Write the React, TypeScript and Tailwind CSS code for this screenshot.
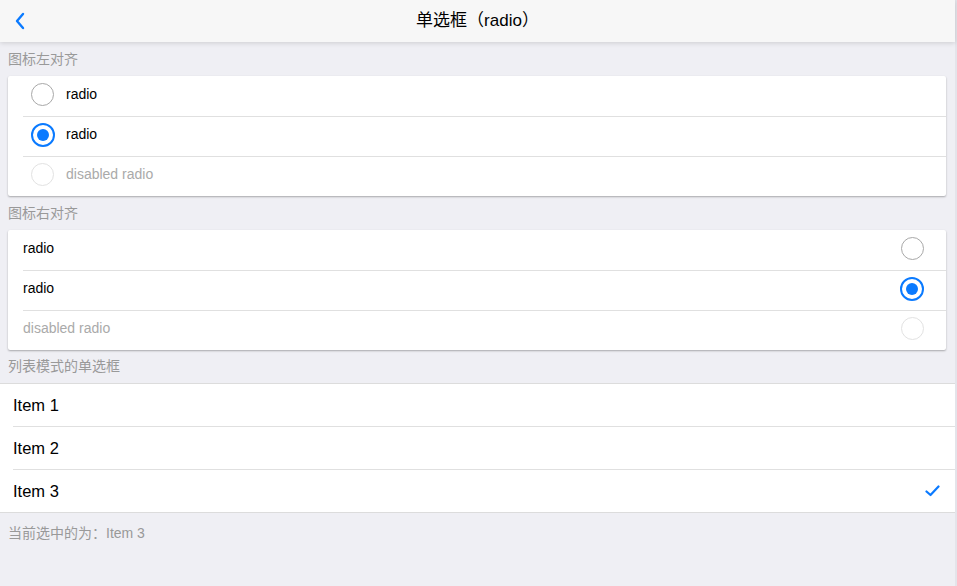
import React from "react";

const font = { fontFamily: '"Liberation Sans", Arial, "Noto Sans CJK SC", sans-serif' };

function Radio({ checked, disabled }: { checked?: boolean; disabled?: boolean }) {
  if (checked) {
    return (
      <div className="flex h-[24px] w-[24px] items-center justify-center rounded-full border-2 border-[#0a7aff]">
        <div className="h-[12px] w-[12px] rounded-full bg-[#0a7aff]" />
      </div>
    );
  }
  return (
    <div
      className={
        "h-[23px] w-[23px] rounded-full border " +
        (disabled ? "border-[#e2e2e2]" : "border-[#a8a8a8]")
      }
    />
  );
}

function SectionTitle({ children, h }: { children: React.ReactNode; h?: string }) {
  return (
    <div className={"flex items-center px-[8px] text-[14px] text-[#999] " + (h ?? "h-[34px]")}>{children}</div>
  );
}

export default function App() {
  const rows = [
    { label: "radio", checked: false, disabled: false },
    { label: "radio", checked: true, disabled: false },
    { label: "disabled radio", checked: false, disabled: true },
  ];
  return (
    <div className="flex min-h-[586px] w-[957px] bg-[#efeff4]" style={font}>
      <div className="w-[955px]">
        <div className="relative z-10 flex h-[42px] items-center justify-center bg-[#f7f7f7] shadow-[0_1px_5px_rgba(0,0,0,0.15)]">
          <svg className="absolute left-[14px] top-[12px]" width="12" height="18" viewBox="0 0 12 18">
            <path d="M9 2 L3 9 L9 16" fill="none" stroke="#0a7aff" strokeWidth="2.4" strokeLinecap="round" strokeLinejoin="round" />
          </svg>
          <span className="text-[17px] text-[#000]">单选框（radio）</span>
        </div>

        <SectionTitle>图标左对齐</SectionTitle>
        <div className="ml-[8px] mr-[9px] rounded-[2px] bg-white shadow-[0_1px_2px_rgba(0,0,0,0.3)]">
          {rows.map((r, i) => (
            <div key={i} className="flex h-[40px] items-center pl-[15px]">
              <div className={"flex h-full flex-1 items-center pb-[4px] " + (i > 0 ? "border-t border-[#e0e0e0]" : "")}>
                <div className="flex w-[43px] items-center pl-[8px]">
                  <Radio checked={r.checked} disabled={r.disabled} />
                </div>
                <span className={"text-[14px] " + (r.disabled ? "text-[#aaa]" : "text-black")}>{r.label}</span>
              </div>
            </div>
          ))}
        </div>

        <SectionTitle>图标右对齐</SectionTitle>
        <div className="ml-[8px] mr-[9px] rounded-[2px] bg-white shadow-[0_1px_2px_rgba(0,0,0,0.3)]">
          {rows.map((r, i) => (
            <div key={i} className="flex h-[40px] items-center pl-[15px]">
              <div
                className={
                  "flex h-full flex-1 items-center justify-between pb-[4px] pr-[22px] " +
                  (i > 0 ? "border-t border-[#e0e0e0]" : "")
                }
              >
                <span className={"text-[14px] " + (r.disabled ? "text-[#aaa]" : "text-black")}>{r.label}</span>
                <Radio checked={r.checked} disabled={r.disabled} />
              </div>
            </div>
          ))}
        </div>

        <SectionTitle h="h-[33px]">列表模式的单选框</SectionTitle>
        <div className="border-y border-[#dcdcdc] bg-white">
          {["Item 1", "Item 2", "Item 3"].map((t, i) => (
            <div key={t} className="pl-[13px]">
              <div
                className={
                  "flex items-center justify-between pr-[15px] " +
                  (i > 0 ? "h-[43px] border-t border-[#e0e0e0]" : "h-[42px]")
                }
              >
                <span className="text-[16.5px] text-black">{t}</span>
                {i === 2 && (
                  <svg width="15" height="12" viewBox="0 0 15 12">
                    <path d="M1.5 6.5 L5.5 10 L13.5 1.5" fill="none" stroke="#0a7aff" strokeWidth="2.2" strokeLinecap="round" strokeLinejoin="round" />
                  </svg>
                )}
              </div>
            </div>
          ))}
        </div>
        <div className="flex h-[40px] items-center px-[8px] text-[14px] text-[#999]">当前选中的为：Item 3</div>
      </div>
      <div className="w-[2px] bg-[#e4e4ea]" />
    </div>
  );
}
